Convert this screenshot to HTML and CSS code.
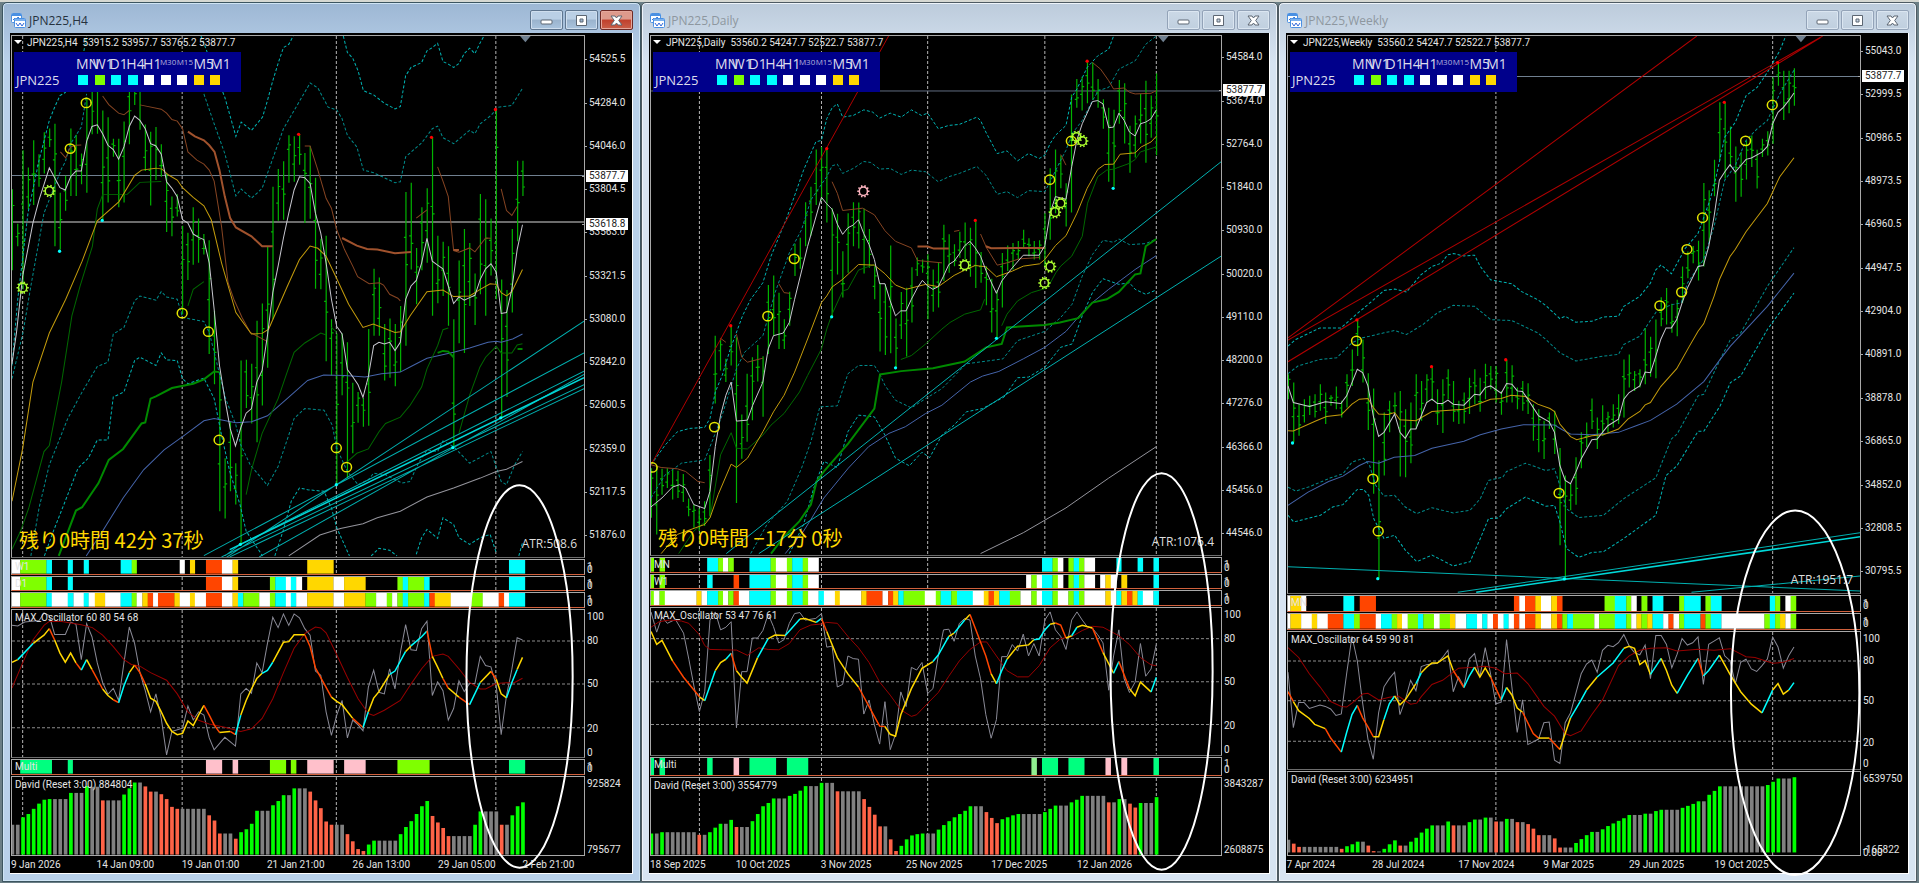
FILE: index.html
```html
<!DOCTYPE html>
<html lang="ja">
<head>
<meta charset="utf-8">
<title>JPN225</title>
<link rel="stylesheet" href="styles.css">
</head>
<body>
<main class="workspace" id="workspace"></main>
<script src="charts.js"></script>
</body>
</html>
```
FILE: styles.css
```css
* { box-sizing: border-box; }
body {
  margin: 0;
  height: 100vh;
  background: #d6d8d2;
  font-family: Roboto, "Noto Sans", sans-serif;
  font-size: 10px;
  color: #e4e4e4;
  overflow: hidden;
}
.workspace {
  display: grid;
  grid-template-columns: 639fr 637fr 639fr;
  height: 100%;
  padding: 2px 2px 1px;
  background: linear-gradient(#d6d8d2 2px, #6b7f86 2px);
}
.window {
  display: flex;
  flex-direction: column;
  min-width: 0;
  min-height: 0;
  padding: 0 7px 7px;
  border: 1px solid #4e5a62;
  border-radius: 5px 5px 0 0;
  background: linear-gradient(#bccbdb, #d7e4f2 60px);
  box-shadow: inset 0 0 0 1px #eef4fa;
}
.window.active {
  background: linear-gradient(#9db7d4, #b9d1ea 60px);
  border-color: #3c5560;
  box-shadow: inset 0 0 0 1px #cfe4f4;
}
.titlebar {
  display: flex;
  align-items: center;
  gap: 2px;
  flex: none;
  height: 30px;
  padding: 4px 0 0 1px;
}
.titlebar > svg { width: 15px; height: 15px; flex: none; }
.titlebar button svg { width: 15px; height: 15px; }
.titlebar h1 {
  margin: 0;
  flex: 1;
  padding: 2px 0 0 1px;
  font: 12px/20px "Open Sans", "Noto Sans", sans-serif;
  color: #8e979f;
}
.active .titlebar h1 { color: #26323e; }
.titlebar button {
  display: grid;
  place-items: center;
  width: 33px;
  height: 20px;
  padding: 0;
  border: 1px solid #93a3b8;
  border-radius: 2px;
  background: linear-gradient(#cbd8e6, #c0cfdf);
  box-shadow: inset 0 0 0 1px #dbe6f1;
}
.active .titlebar button {
  border-color: #5f7690;
  background: linear-gradient(#bacfe5 45%, #9ab3cd 50%, #aac4de);
  box-shadow: inset 0 0 0 1px #cfdeee;
}
.active .titlebar button.close {
  border-color: #6e2a25;
  background: linear-gradient(#dd9a8c 45%, #c0402c 50%, #c9604a);
  box-shadow: inset 0 0 0 1px #e5a79b;
}
.client {
  position: relative;
  display: flex;
  flex-direction: column;
  flex: 1;
  min-height: 0;
  padding: 2px 0 0 1px;
  background: #000;
  border-right: 1px solid #fff;
  border-bottom: 1px solid #fff;
}
.stack {
  position: relative;
  display: flex;
  flex-direction: column;
  flex: 1;
  min-height: 0;
}
.pane {
  display: grid;
  grid-template-columns: 1fr 47px;
  flex-basis: 0;
  min-height: 0;
}
.plot {
  position: relative;
  min-width: 0;
  min-height: 0;
  border: 1px solid #a8a8a8;
  border-bottom-color: #6c6c6c;
  margin-bottom: 1px;
}
.plot.last { margin-bottom: 0; border-bottom-color: #a8a8a8; }
.plot svg, .overlay {
  position: absolute;
  inset: 0;
  width: 100%;
  height: 100%;
}
.overlay { width: calc(100% - 47px); overflow: visible; pointer-events: none; }
.plot svg *, .overlay * { vector-effect: non-scaling-stroke; }
.plot path, .overlay ellipse { fill: none; }
.strip { border-bottom-color: #d0603c; }
.axis { position: relative; }
.axis span, .times span {
  position: absolute;
  line-height: 12px;
  white-space: nowrap;
}
.axis span { left: 4px; transform: translateY(-50%); }
.axis.sub span { left: 2px; }
.axis.main span::before {
  content: "";
  position: absolute;
  left: -4px;
  top: 6px;
  width: 2px;
  height: 1px;
  background: #aaa;
}
.axis span.tag {
  left: 1px;
  padding: 0 3px;
  background: #fff;
  color: #222;
  z-index: 1;
}
.times { position: relative; flex: none; height: 17px; margin-right: 47px; }
.times span { top: 3px; }
.label {
  position: absolute;
  left: 3px;
  top: 2px;
  margin: 0;
  line-height: 12px;
  white-space: nowrap;
}
.strip .label, .multi .label { top: 1px; }
.plot .quote { top: 1px; left: 2px; }
.quote i {
  display: inline-block;
  margin-right: 5px;
  border: 4px solid transparent;
  border-top-color: #fff;
  border-bottom: 0;
  vertical-align: 2px;
}
.quote b { margin-right: 5px; font-weight: 400; }
.matrix {
  position: absolute;
  left: 2px;
  top: 16px;
  display: grid;
  grid-template-columns: 60px 151px;
  align-items: center;
  width: 227px;
  height: 40px;
  padding: 4px 0 4px 2px;
  background: #00008b;
  font: 13px/16px "Open Sans", "Noto Sans", sans-serif;
  color: #dcdcec;
}
.frames {
  display: grid;
  grid-template-columns: repeat(9, minmax(0, 1fr));
  grid-column: 2;
  font-size: 14px;
  white-space: nowrap;
}
.frames small { font-size: 8px; line-height: 11px; color: #b4b4dc; }
.cells { display: grid; grid-template-columns: repeat(9, minmax(0, 1fr)); padding-left: 2px; }
.cells i { width: 10px; height: 10px; }
.countdown {
  position: absolute;
  left: 7px;
  bottom: 4px;
  margin: 0;
  font: 20px/26px "Noto Sans CJK JP", sans-serif;
  color: #ffd700;
  white-space: nowrap;
}
.atr {
  position: absolute;
  right: 7px;
  bottom: 5px;
  margin: 0;
  font: 12px/16px "Open Sans", "Noto Sans", sans-serif;
  color: #dcdcdc;
}
.bg-C { background: #00ffff; }
.bg-L { background: #7fff00; }
.bg-W { background: #fff; }
.bg-Y { background: #ffd700; }
```
FILE: charts.js
```js
const COLORS = { W: '#fff', L: '#7fff00', C: '#00ffff', Y: '#ffd700', R: '#ff4500',
  G: '#00ff7f', P: '#ffc0cb', A: '#90ee90', g: '#00ff00', n: '#808080', r: '#ff6347',
  y: '#ffd700', c: '#00ffff', o: '#ff4500' };

const SERIES = {
  band: { stroke: '#00b4b4', dash: '3 2' },
  band2: { stroke: '#008c8c', dash: '3 2' },
  ma: { stroke: '#c8c8d0' },
  mid: { stroke: '#c49c0c' },
  brown: { stroke: '#864422' },
  brownT: { stroke: '#a0522d', width: 2 },
  green: { stroke: '#006800' },
  greenT: { stroke: '#008a00', width: 2 },
  blue: { stroke: '#4564aa' },
  low: { stroke: '#94949c' },
  trend: { stroke: '#00b0b0' },
  trendB: { stroke: '#00d8d8', width: 1.5 },
  red: { stroke: '#b00000' }
};

const CHARTS = [
{
  name: 'JPN225,H4', ohlc: '53915.2 53957.7 53765.2 53877.7', active: true,
  atr: 'ATR:508.6', countdown: '残り0時間 42分 37秒',
  left: 29, right: 1424, top: 105, bottom: 2569, step: 12.97,
  vlines: [55, 444, 820, 1209], hlines: [[526, '#708090'], [667, '#d8d8d8']], marker: 1281,
  main: [105, 1678],
  ticks: ['54525.5', '54284.0', '54046.0', '53804.5', '53563.0', '53321.5', '53080.0', '52842.0', '52600.5', '52359.0', '52117.5', '51876.0'],
  tick0: 178, tickStep: 129.9, tags: [['53877.7', 527], ['53618.8', 671]],
  bars: '568-812 672-740 450-870 502-628 420-615 462-560 396-520 384-440 370-740 578-750 527-633 384-588 403-588 460-553 290-578 200-402 200-400 330-660 350-608 415-470 415-622 363-608 240-432 200-313 200-388 372-513 394-617 380-540 432-530 520-697 590-710 583-650 678-945 699-842 622-796 656-790 703-765 722-1065 935-1157 1120-1540 1380-1562 1270-1480 1395-1520 1085-1640 1083-1228 1095-1275 965-1332 913-1221 742-1107 560-960 507-663 483-660 405-548 408-545 402-494 458-670 437-657 533-868 717-870 708-1087 960-1130 1003-1456 1003-1190 1030-1440 1152-1365 1180-1273 1198-1285 990-1282 808-1010 834-1010 975-1145 958-1137 975-1163 920-1120 576-1040 548-810 745-915 622-812 565-790 412-950 708-912 726-890 740-980 960-1345 783-1033 688-1062 730-920 822-978 582-885 598-950 656-828 327-900 840-1258 872-1195 688-940 482-725 482-588',
  lines: [
    ['band', '29,1100 43,900 68,640 95,480 120,360 133,320 146,285 160,275|200,180 211,105|490,105 510,170 548,290 575,408 588,365 613,390 640,350 652,300 665,240 680,180 691,140 704,130 715,105|837,105 847,155 860,172 873,210 886,270 911,283 937,308 963,325 976,318 989,225 1002,200 1028,185 1041,150 1054,140 1067,127 1080,182 1093,190 1106,200 1119,188 1132,158 1145,142 1158,158 1171,125 1180,105'],
    ['band2', '29,1140 56,1000 75,860 107,640 150,505 159,485 172,430 198,380 211,280|497,280 522,370 548,460 575,588 588,567 613,595 639,565 652,520 678,430 691,385 717,330 756,247 775,262 800,320 821,328 834,355 847,405 870,440 886,510 911,518 963,548 976,545 989,470 1028,428 1054,385 1067,377 1080,412 1106,430 1145,390 1158,400 1171,370 1197,345 1215,320 1248,315 1274,263'],
    ['band2', '75,1675 95,1530 120,1400 165,1260 200,1180 237,1103 263,1090 276,1005 302,985 328,905 341,890 380,903 393,877 406,893 432,900 445,955 497,967 510,1000 530,1100 550,1200 575,1280 587,1340 610,1400 652,1462 678,1405 704,1310 717,1260 743,1230 790,1235 810,1280 821,1350 847,1420 873,1460 898,1445 911,1425 940,1430 980,1455 1000,1450 1020,1395 1041,1355 1067,1360 1080,1328 1106,1345 1145,1395 1197,1360 1222,1450 1235,1460 1255,1400 1274,1360'],
    ['band', '108,1675 130,1600 165,1490 190,1410 215,1380 237,1325 263,1325 276,1195 302,1180 328,1085 341,1075 380,1100 393,1062 406,1083 432,1085 445,1140 458,1155 497,1138 522,1200 540,1310 560,1420 585,1520 600,1600 640,1675|670,1675 690,1600 710,1510 730,1470 750,1475 790,1480 808,1530 821,1590 852,1675|905,1675 924,1652 950,1658 968,1675|1015,1670 1028,1620 1041,1595 1067,1622 1080,1560 1106,1580 1119,1620 1145,1640 1171,1620 1195,1610 1210,1665|1265,1675 1274,1635'],
    ['low', '704,1675 780,1612 830,1592 885,1578 920,1560 976,1540 1041,1497 1106,1470 1171,1440 1210,1420 1235,1413 1274,1390'],
    ['blue', '210,1675 250,1600 300,1500 350,1415 400,1355 450,1310 497,1267 522,1260 575,1273 613,1270 652,1252 700,1200 750,1145 789,1129 840,1130 890,1135 930,1125 976,1120 1002,1103 1041,1078 1106,1060 1145,1047 1190,1030 1210,1027 1222,1030 1250,1020 1274,1005'],
    ['green', '29,1655 50,1600 70,1530 107,1360 120,1342 150,1150 175,950 195,860 225,740 237,628 250,584 310,583 341,547 393,544|458,920 471,870 497,847|600,1490 613,1415 626,1360 639,1305 678,1200 700,1120 717,1060 743,1032 782,1002 795,1008|808,985 821,1000|847,1390 870,1365 898,1352 924,1300 940,1275 976,1256 1000,1220 1028,1165 1041,1110 1067,1040 1080,992 1093,987|1119,1305 1145,1190 1170,1105 1184,1075 1210,1042 1222,1062 1248,1062 1261,1038 1274,1034'],
    ['greenT', '143,1675 185,1538 200,1528 240,1455 265,1385 300,1352 345,1275 354,1272 367,1200 380,1193 419,1168 471,1155 497,1142 522,1118 535,1120|1067,1062 1080,1056 1093,1058 1106,1075|1262,1050 1274,1050'],
    ['brown', '250,286 265,312 289,338 302,343 315,330|147,455 160,473 168,450 172,440 185,435 198,434|341,313 393,326 406,338 419,357 432,362 445,385 458,455 480,480 497,492 510,510 522,543 540,680 556,850 570,900 590,955 610,1000 652,1028|743,437 756,437 775,510 795,595 808,625 821,690 840,750 860,800 872,832 900,853 925,850 935,857 950,885 970,897 976,905|1067,500 1080,543 1093,590 1106,753 1119,758 1145,745 1158,757 1184,715 1197,716|1015,655 1041,630|1222,567 1235,632 1248,647 1261,620'],
    ['brownT', '458,394 475,408 497,420 510,435 523,455 535,510 548,590 561,655 575,683 613,710 639,740 665,740|834,715 870,738 895,748 920,750 963,761 1002,757|1106,751 1119,751'],
    ['mid', '29,1510 55,1350 80,1150 120,1002 160,900 200,785 237,663 290,605 328,526 345,510 380,504 395,507 410,524 432,540 445,563 471,592 497,618 515,660 540,790 575,940 613,1005 639,1003 655,990 700,862 730,780 756,739 775,746 795,770 820,835 850,915 885,985 910,975 963,1000 976,998 1000,950 1041,877 1080,872 1106,892 1145,890 1171,870 1195,853 1210,855 1222,880 1235,890 1248,877 1274,810'],
    ['ma', '29,1095 40,1000 55,830 80,670 95,600 120,503 146,563 159,570 172,530 185,513 198,513 211,423 224,378 237,373 250,400 263,435 276,448 289,477 302,440 315,378 328,347 341,360 354,385 367,430 380,437 393,462 406,545 419,565 432,590 445,660 458,670 471,703 484,713 497,720 510,790 522,930 535,1100 548,1200 561,1290 574,1343 587,1288 600,1244 613,1230 626,1150 639,1115 652,1010 665,880 678,800 691,715 704,640 717,570 730,530 743,533 756,550 769,640 782,700 795,790 808,900 821,982 834,1005 847,1112 860,1134 873,1158 885,1196 898,1134 911,1040 924,1030 937,1035 950,1030 963,1055 976,1030 989,900 1002,860 1015,843 1028,790 1041,716 1054,785 1067,797 1080,808 1093,860 1106,913 1119,893 1132,903 1145,895 1158,888 1171,840 1184,808 1197,793 1210,818 1222,943 1235,940 1248,870 1261,750 1274,675'],
    ['trend', '545,1685 1424,966|497,1674 1424,1062|548,1675 586,1640 1424,1117|540,1678 1424,1158|560,1678 1424,1170|632,1678 1424,1127'],
    ['trendB', '560,1656 1424,1137']
  ],
  dots: { red: [[728, 402], [1052, 411], [1208, 327]], cyan: [[145, 755], [249, 662], [586, 1640], [820, 1460], [1104, 1348], [1221, 1258]] },
  circles: [[210, 307], [171, 445], [444, 942], [508, 998], [534, 1325], [820, 1349], [845, 1407]],
  suns: [[120, 573], [55, 865]],
  strips: [
    { y: [1678, 1728], label: 'W1', runs: 'W29-49 L49-113 C113-126 C165-177 C204-216 C294-321 L321-333 W438-450 Y463-475 R502-541 W541-567 Y567-580 Y749-813 C1241-1280' },
    { y: [1728, 1778], label: 'D1', runs: 'W29-49 L49-113 C113-126 C165-177 R502-541 W541-567 Y567-580 L658-671 C671-697 W697-709 C709-722 W722-736 Y749-813 W813-839 Y839-891 L969-982 C982-995 L995-1034 C1034-1047 C1241-1280' },
    { y: [1778, 1828], label: '', runs: 'W29-49 L49-113 C113-126 W126-165 C165-179 W179-204 C204-216 W216-231 Y231-256 W256-294 C294-321 L321-333 W333-347 Y347-360 R360-373 W373-385 R385-425 Y425-438 W438-463 Y463-475 W475-502 R502-541 W541-567 Y567-580 C580-593 L593-632 W632-658 L658-671 C671-697 W697-709 C709-722 W722-749 Y749-813 W813-839 Y839-891 L891-917 W917-943 L943-956 W956-969 L969-982 C982-995 L995-1034 C1034-1047 R1047-1060 Y1060-1099 W1099-1150 L1150-1177 W1177-1216 R1216-1229 W1229-1241 C1241-1280' }
  ],
  osc: { y: [1828, 2280], label: 'MAX_Oscillator 60 80 54 68', levels: [[100, 232], [80, 303], [50, 435], [20, 569], [0, 640]],
    white: '29,255 43,257 60,245 95,240 107,217 120,225 133,283 159,283 172,245 185,252 198,360 211,250 224,290 237,370 250,430 263,466 276,448 289,485 302,370 315,260 328,310 341,400 354,455 367,520 380,465 393,540 406,652 419,580 445,570 458,502 471,545 484,520 497,530 510,600 522,636 548,598 574,625 587,465 600,448 613,463 626,370 639,400 652,310 665,230 678,262 691,220 704,255 717,220 730,232 743,265 756,285 769,395 782,408 795,520 808,592 821,530 834,485 847,600 860,545 873,560 885,578 898,445 911,392 924,460 937,465 950,388 963,450 976,340 989,253 1002,330 1015,332 1028,265 1041,242 1054,470 1067,428 1080,455 1093,545 1106,510 1119,425 1132,458 1145,433 1158,433 1171,350 1184,378 1197,382 1210,440 1222,590 1235,470 1248,390 1261,293 1274,300',
    red: '29,447 55,370 80,300 107,255 120,243 150,243 198,253 225,262 250,285 276,320 302,360 320,375 341,380 367,400 406,423 432,465 458,520 484,546 510,557 548,567 587,580 613,572 639,540 665,480 691,400 717,325 743,280 769,260 782,263 795,278 821,345 847,415 873,480 898,525 911,531 937,515 976,485 1002,435 1028,388 1054,350 1080,343 1093,350 1119,388 1145,430 1171,450 1184,450 1210,433 1235,431 1255,430 1274,417',
    colored: 'y 29,368 43,360|c 81,310|y 94,297 107,285 120,265|o 133,300|y 146,340 159,368 172,340 185,370|o 198,392|c 211,360|y 224,390|o 250,450|y 263,470 276,483|o 289,492|c 302,440 315,400|y 328,377|o 341,400 354,435|y 367,478 380,488 393,520 406,555 419,580 432,590 445,586 458,548 471,562 484,530 497,500|o 510,530 522,560 535,583|y 561,580|o 574,590|c 587,530|y 600,485 613,450 626,418 639,402|c 652,393 665,368|y 691,307 704,305 717,284 743,284|o 756,320 769,385 782,415 808,475|y 821,488 834,498 860,540|o 885,568|c 898,520|y 911,478 924,458 950,405|c 963,395 989,335|y 1002,318|c 1028,290 1041,272|o 1054,350|y 1067,383 1080,418|o 1093,447|y 1119,475|o 1145,498|c 1171,430|y 1197,396|o 1210,420|y 1222,465 1235,477|c 1248,430 1261,390|y 1274,353' },
  multi: { y: [2280, 2330], label: 'Multi', ends: [682, 690], runs: 'G49-126 G165-177 P502-541 P567-580 L658-697 L709-722 P749-813 P839-891 L969-1047 G1241-1280' },
  david: { y: [2330, 2570], base: 949, label: 'David (Reset 3:00) 884804', scale: [['925824', 733], ['795677', 931]],
    bars: 'n857*2 g834 g824 g808 g792 g780 g778 n778*3 g759 n759*2 g738 n740*2 r782 n782*3 g764 g745 g727 n727 r739 r755 n755 r763 r778 r802 r808 n808*5 r828 r844 r884 n884*2 r900 g880 g871 g854 g814 n814*2 g797 g784 g766 n766 g745 n745*2 r755 r782 r806 r847 r857 n857*2 r886 r908 r932 r938 g918 g906 n906*4 g886 g864 g846 g824 g800 g784 r830 r850 r867 r892 n892*4 g857 g816 n816*3 r857 n857 g828 g800 g788' },
  times: [['9 Jan 2026', 29], ['14 Jan 09:00', 237], ['19 Jan 01:00', 444], ['21 Jan 21:00', 651], ['26 Jan 13:00', 859], ['29 Jan 05:00', 1067], ['2 Feb 21:00', 1272]],
  ellipse: [1265, 2030, 129, 574]
},
{
  name: 'JPN225,Daily', ohlc: '53560.2 54247.7 52522.7 53877.7',
  atr: 'ATR:1076.4', countdown: '残り0時間 −17分 0秒',
  left: 25, right: 1426, top: 105, bottom: 2569, step: 13.07,
  vlines: [144, 444, 705, 993, 1267], hlines: [[271, '#606c80']], marker: 1284,
  main: [105, 1672],
  ticks: ['54584.0', '53674.0', '52764.0', '51840.0', '50930.0', '50020.0', '49110.0', '48200.0', '47276.0', '46366.0', '45456.0', '44546.0'],
  tick0: 172, tickStep: 129.9, tags: [['53877.7', 271]],
  bars: '1410-1560 1403-1610 1412-1490 1410-1470 1415-1505 1418-1500 1428-1512 1502-1555 1520-1590 1532-1600 1510-1585 1370-1555 1010-1215 1018-1115 1080-1150 980-1100 1015-1515 1248-1382 1125-1330 1075-1265 1038-1148 1072-1255 857-1065 828-1010 880-1050 960-1050 877-980 732-830 714-808 607-740 560-708 448-615 440-602 446-668 625-955 642-825 755-895 640-820 607-740 608-747 626-822 688-805 800-900 850-1058 855-1068 738-1063 958-1105 878-1020 865-1073 803-970 774-830 780-820 764-960 810-938 790-925 675-845 704-820 734-800 696-775 668-780 684-832 665-866 757-850 800-918 838-1000 872-1018 760-925 738-815 730-810 724-780 690-745 716-770 724-780 722-780 640-800 504-720 448-640 466-565 550-680 282-638 235-322 228-330 182-308 185-298 235-322 296-385 322-545 328-560 238-370 248-430 376-518 345-472 280-430 240-488 285-412 218-465',
  lines: [
    ['band', '25,1400 60,1340 90,1300 120,1290 157,1287 170,1260 183,1180 200,1130 220,1050 250,950 270,900 300,850 320,770 360,650 400,510 430,425 444,420 457,355 470,322 483,310 496,350 522,345 548,328 570,335 587,353 613,338 640,350 665,328 690,345 705,338 731,385 757,375 783,372 826,350 835,360 848,395 876,460 900,452 926,482 953,460 979,475 993,465 1006,430 1019,405 1045,375 1059,290 1072,265 1097,200 1123,165 1150,145 1162,105'],
    ['band2', '25,1500 60,1430 100,1395 157,1385 175,1330 200,1250 235,1110 255,1060 300,1010 330,880 365,760 395,690 418,600 440,560 457,530 470,497 483,492 496,520 522,505 548,484 565,487 587,507 613,505 640,523 665,510 700,515 731,545 757,530 783,520 826,499 848,525 876,583 900,575 926,593 953,572 993,575 1006,545 1032,480 1045,450 1060,400 1085,360 1110,300 1125,270 1150,260 1175,205 1215,180 1228,155 1241,130 1267,105'],
    ['band2', '270,1668 310,1580 360,1510 395,1410 418,1330 440,1225 483,1222 509,1125 535,1100 574,1100 587,1125 600,1160 626,1205 665,1228 700,1200 740,1170 800,1095 890,1080 926,1025 993,997 1032,955 1060,915 1085,830 1110,765 1136,722 1162,728 1175,718 1201,735 1241,732 1267,718'],
    ['band', '365,1668 400,1580 425,1470 450,1390 483,1408 509,1300 535,1250 574,1255 600,1310 626,1380 660,1403 691,1362 710,1378 740,1310 770,1280 800,1240 840,1230 893,1195 926,1137 953,1135 993,1105 1032,1045 1060,1035 1085,950 1110,880 1136,838 1175,855 1201,850 1215,870 1241,885 1267,872'],
    ['low', '835,1668 940,1605 1045,1530 1150,1440 1267,1345'],
    ['blue', '355,1668 400,1600 418,1565 450,1500 510,1410 560,1345 610,1305 650,1285 700,1245 740,1220 810,1150 840,1132 880,1118 940,1080 993,1045 1045,997 1085,940 1110,910 1150,870 1215,810 1267,768'],
    ['green', '93,1668 130,1600 170,1560 196,1370 222,1303 235,1350 262,1352 300,1310 320,1280 352,1245 390,1180 410,1130 444,1050 457,990 470,945 496,875 509,870 535,812 574,795|639,1082 665,1070 700,1035 740,990 760,970 796,945 835,932 845,900|887,980 900,945 926,905 960,880 1000,865 1020,820 1032,800 1059,770 1085,710 1098,610 1123,530 1145,510 1162,507 1200,490 1215,478 1228,455 1267,440'],
    ['greenT', '320,1668 350,1620 390,1570 418,1520 432,1450 450,1420 510,1335 574,1230 588,1127 640,1117 718,1108 796,1088 850,1045 887,1035 900,985 993,978 1030,970 1075,957 1110,910 1145,900 1175,878 1215,825 1228,822 1241,740 1267,718'],
    ['brown', '25,1400 50,1408 90,1412 110,1420 140,1450 157,1454|196,1018 209,1030|235,1005 248,1075 262,1090 300,1078|339,853 352,880 365,882|470,545 483,580 496,632 545,625 574,645 600,693 626,725 665,745 680,783 740,790|835,703 850,745 876,797 900,790 930,778 980,774|1110,185 1130,205 1150,240 1162,265 1188,262 1201,275 1215,280 1254,278 1267,270|1032,463 1045,495|770,695 783,692'],
    ['brownT', '680,741 705,741 720,747 757,747|848,740 861,746 993,745'],
    ['mid', '50,1668 90,1610 157,1580 170,1560 190,1490 222,1398 235,1408 262,1380 300,1300 326,1240 352,1190 378,1120 410,1020 444,910 457,890 470,863 496,840 522,810 535,795 574,797 600,823 626,857 652,870 700,855 731,862 770,828 796,812 822,798 848,802 874,832 913,815 940,800 980,793 993,780 1019,738 1045,708 1072,640 1097,565 1123,508 1140,493 1162,492 1178,462 1215,458 1230,440 1254,425 1267,408'],
    ['ma', '25,1527 52,1500 78,1467 95,1460 110,1470 130,1520 157,1532 170,1480 183,1345 196,1250 209,1190 222,1150 235,1268 262,1265 275,1220 300,1150 313,1050 326,1010 350,1002 365,970 378,900 410,740 444,592 457,612 470,628 483,673 496,704 509,684 522,676 535,660 548,702 561,735 574,780 587,853 600,853 613,905 626,950 639,935 652,935 665,900 680,865 692,843 705,860 718,870 731,862 744,830 757,795 770,785 783,763 796,738 809,725 822,745 835,770 848,812 861,848 874,882 887,845 913,805 940,767 979,767 993,738 1006,640 1019,590 1045,598 1059,500 1072,418 1085,370 1110,303 1123,300 1136,310 1150,382 1162,380 1175,338 1188,360 1201,395 1215,407 1228,370 1241,365 1254,355 1267,328'],
    ['trend', '210,1668 1426,485|290,1668 1426,770'],
    ['red', '25,1400 609,105']
  ],
  dots: { red: [[457, 445], [822, 662], [1097, 181], [221, 980]], cyan: [[1161, 565], [469, 953], [626, 1107], [874, 1018]] },
  circles: [[377, 778], [1005, 539], [1058, 422], [181, 1286], [312, 951], [28, 1408]],
  suns: [[1071, 410], [1085, 422], [1018, 637], [1032, 610], [1006, 801], [992, 851], [796, 797], [547, 574, '#ffb6c1']],
  strips: [
    { y: [1672, 1722], label: 'MN', runs: 'L25-32 L46-59 C163-190 L190-202 W202-215 L215-228 C267-319 L319-332 W332-359 L359-372 C372-398 L398-411 W411-437 C986-1012 L1012-1025 W1025-1038 L1051-1064 C1064-1077 L1077-1090 W1090-1116 C1169-1181 C1221-1234 C1260-1273' },
    { y: [1722, 1772], label: 'W1', runs: 'L25-32 L46-59 C163-176 R228-241 C267-319 L319-332 W332-359 L359-372 C372-398 L398-411 W411-437 W947-960 L960-973 W973-986 C986-1012 L1012-1025 W1025-1038 L1051-1064 C1064-1077 L1077-1090 W1090-1116 W1129-1142 Y1142-1155 W1155-1169 Y1181-1195 C1260-1273' },
    { y: [1772, 1823], label: '', runs: 'L25-32 W32-46 L46-59 W59-137 Y137-149 W149-163 C163-190 L190-202 W202-215 L215-228 R228-241 W241-267 C267-319 L319-332 W332-359 L359-372 C372-398 L398-411 W411-437 C437-450 W450-477 Y477-489 W489-542 Y542-555 R555-594 W594-608 R608-620 Y620-633 C633-646 L646-698 W698-725 L725-737 C737-763 L763-777 C777-816 W816-843 Y843-855 R855-868 Y868-881 C881-907 L907-933 W933-960 L960-973 W973-986 C986-1012 L1012-1025 W1025-1051 L1051-1064 C1064-1077 L1077-1090 W1090-1142 Y1142-1155 W1155-1169 C1169-1181 Y1181-1195 R1195-1208 Y1208-1221 C1221-1234 W1234-1260 C1260-1273' }
  ],
  osc: { y: [1823, 2272], label: 'MAX_Oscillator 53 47 76 61', levels: [[100, 226], [80, 297], [50, 429], [20, 560], [0, 632]],
    white: '25,215 39,277 52,230 65,250 85,238 105,280 118,360 131,445 144,520 157,460 170,240 183,215 196,270 209,262 222,245 235,570 248,398 261,398 274,295 287,295 300,272 313,222 326,260 339,310 352,300 365,250 378,220 391,217 404,240 430,235 444,220 457,323 470,320 483,445 496,437 509,350 522,358 535,360 548,528 561,485 574,560 587,620 600,490 613,637 626,590 639,460 652,505 665,385 678,393 691,370 705,465 718,450 731,350 744,270 757,268 770,305 783,250 796,235 809,240 822,350 835,420 848,530 861,602 874,545 887,352 900,352 913,315 926,335 940,283 953,350 966,312 979,350 993,240 1006,215 1019,270 1032,290 1045,330 1059,240 1072,215 1085,240 1097,260 1110,265 1123,285 1136,310 1150,455 1162,350 1175,270 1188,420 1201,462 1215,430 1228,312 1241,412 1254,390 1267,315',
    red: '25,262 45,245 70,240 100,243 118,250 144,285 157,318 170,330 200,331 235,332 262,348 290,325 313,330 339,331 365,312 391,270 418,255 444,252 457,247 483,250 509,290 535,325 561,370 587,430 613,470 639,515 665,535 678,530 705,495 731,462 757,412 783,365 809,330 835,307 850,307 874,350 900,395 926,414 953,414 979,380 1006,325 1032,297 1060,290 1085,272 1110,259 1136,262 1175,288 1201,315 1228,355 1254,377 1267,380',
    colored: 'y 25,275 39,314 52,302 78,365|o 105,415 144,475|y 157,487|c 183,395|y 196,370 209,360|c 222,342|o 235,395|y 248,415 261,433 287,355|c 313,297|y 330,286 355,287|c 378,255 391,237|y 404,235 431,247|c 444,235|o 457,275|y 483,355 509,405 535,445|o 574,535 587,565 600,566|y 613,590 626,596 639,530 665,450 691,388 718,367|c 731,347 757,290|y 770,280|c 796,240|y 809,223|o 822,265 848,350 861,405|y 874,435|c 887,395 900,360|y 926,320 953,316 966,300|c 979,298 993,270 1006,253|y 1019,249|o 1032,255 1045,295|y 1059,288|c 1072,262|y 1085,256 1110,264|o 1136,340|y 1162,403|c 1175,367|o 1201,450|y 1215,472 1228,430 1254,460|c 1267,415' },
  multi: { y: [2272, 2333], label: 'Multi', ends: [675, 692], runs: 'G25-32 G46-59 G163-176 P228-241 G267-332 G359-411 A960-973 G986-1025 G1051-1090 P1142-1155 P1181-1195 G1260-1273' },
  david: { y: [2333, 2570], base: 949, label: 'David (Reset 3:00) 3554779', scale: [['3843287', 735], ['2608875', 931]],
    bars: 'g884 n884 g880 n880*6 r888 n888 g880 g866 g854 n854 g842 r864 n864*2 g846 g824 g800 g790 g776 n776*2 g768 g762 g752 g738 n738*2 g728 n728*2 r754 n754*4 r778 r802 r826 r862 n862 r902 r938 g922 g902 g890 g886 g884 n884*2 g872 g858 g846 g834 g824 g814 g800 n800*2 r818 r836 r852 g840 g834 g828 g824 n824*4 g818 g808 g798 n798*2 g788 g780 g768 n768*4 r788 n788 g778 n778 r792 r804 g790 n790*2 g772' },
  times: [['18 Sep 2025', 25], ['10 Oct 2025', 235], ['3 Nov 2025', 443], ['25 Nov 2025', 652], ['17 Dec 2025', 861], ['12 Jan 2026', 1071]],
  ellipse: [1278, 2015, 125, 595]
},
{
  name: 'JPN225,Weekly', ohlc: '53560.2 54247.7 52522.7 53877.7',
  atr: 'ATR:1951.7', countdown: '',
  left: 31, right: 1426, top: 105, bottom: 2565, step: 12.99,
  vlines: [538, 1213], hlines: [[227, '#708090']], marker: 1282,
  main: [105, 1784],
  ticks: ['55043.0', '52999.5', '50986.5', '48973.5', '46960.5', '44947.5', '42904.0', '40891.0', '38878.0', '36865.0', '34852.0', '32808.5', '30795.5'],
  tick0: 153, tickStep: 130, tags: [['53877.7', 228]],
  bars: '1125-1200 1150-1330 1215-1310 1200-1270 1190-1248 1185-1255 1155-1235 1180-1275 1188-1220 1162-1230 1205-1255 1125-1225 1050-1160 960-1070 1020-1150 1122-1293 1168-1485 1385-1740 1240-1430 1205-1300 1180-1245 1175-1433 1230-1435 1210-1393 1125-1290 1145-1265 1125-1210 1105-1205 1170-1278 1140-1302 1110-1200 1145-1268 1205-1275 1180-1273 1135-1245 1110-1215 1135-1238 1093-1200 1100-1170 1100-1210 1175-1247 1082-1210 1098-1210 1165-1230 1145-1235 1152-1245 1215-1325 1230-1360 1265-1380 1240-1290 1235-1365 1347-1640 1430-1740 1455-1535 1375-1518 1300-1408 1270-1345 1198-1290 1255-1350 1218-1310 1238-1300 1215-1285 1185-1275 1080-1255 1065-1165 1115-1175 1110-1165 985-1155 1012-1132 960-1137 893-980 865-975 912-1000 900-1010 800-910 755-835 738-790 722-842 548-800 570-725 478-588 305-480 307-535 378-500 438-605 455-590 420-538 405-500 448-565 415-470 392-465 230-430 187-255 210-358 210-338 202-315',
  lines: [
    ['band', '31,1040 50,1020 109,985 160,985 200,942 240,900 265,872 291,868 320,877 355,825 382,800 405,790 420,765 434,761 460,768 486,766 500,800 525,840 577,852 600,875 640,900 660,918 694,957 707,950 733,968 772,965 800,952 837,950 850,920 889,890 915,850 928,810 941,795 966,822 1000,745 1031,700 1060,600 1075,530 1096,410 1122,365 1148,285 1175,260 1200,215 1230,150 1245,105'],
    ['band2', '31,1123 55,1100 109,1080 150,1075 187,1030 213,1015 265,1000 291,993 320,1005 360,975 395,940 434,917 486,920 525,960 577,963 640,1000 660,1020 694,1060 733,1085 800,1070 837,1065 850,1035 889,1010 930,935 966,915 990,910 1005,850 1044,780 1070,680 1096,540 1122,495 1148,420 1175,385 1200,360 1230,280 1265,208'],
    ['band2', '31,1465 50,1477 85,1463 135,1437 165,1425 187,1390 215,1378 230,1400 245,1460 265,1492 291,1490 317,1525 345,1545 382,1527 434,1543 475,1535 500,1500 520,1445 555,1435 564,1418 610,1393 660,1415 681,1410 694,1460 710,1530 740,1557 800,1550 850,1500 928,1437 966,1320 980,1305 1031,1190 1045,1185 1085,1080 1110,1020 1135,1000 1200,860 1265,743'],
    ['band', '31,1550 45,1570 110,1550 140,1525 165,1518 200,1472 215,1472 228,1490 240,1560 265,1620 291,1610 317,1655 345,1690 382,1670 434,1703 475,1690 500,1620 520,1560 545,1558 564,1530 610,1495 660,1523 681,1520 694,1570 710,1650 740,1677 772,1662 800,1660 850,1620 928,1550 953,1430 980,1400 1031,1297 1045,1297 1085,1220 1110,1150 1135,1130 1200,990 1265,880'],
    ['blue', '31,1520 80,1480 130,1448 165,1432 205,1400 226,1388 252,1393 290,1375 340,1370 382,1348 460,1327 500,1307 551,1290 605,1277 681,1278 700,1292 720,1305 772,1307 837,1300 880,1280 915,1264 979,1215 1045,1147 1085,1080 1110,1040 1200,920 1265,820'],
    ['mid', '31,1295 44,1296 100,1265 125,1252 161,1247 187,1215 205,1200 226,1198 239,1225 252,1245 275,1246 291,1240 304,1262 343,1265 382,1237 460,1230 500,1212 525,1200 551,1198 575,1188 610,1192 640,1215 670,1228 681,1237 694,1275 720,1313 735,1322 772,1310 800,1307 837,1290 860,1260 889,1237 902,1217 915,1210 940,1162 979,1108 1010,1040 1031,995 1045,972 1070,890 1083,840 1109,770 1122,748 1148,695 1200,610 1230,530 1265,472'],
    ['ma', '31,1160 44,1210 83,1222 122,1208 160,1213 174,1190 187,1150 200,1110 213,1120 226,1160 239,1250 252,1312 265,1300 291,1245 304,1300 317,1318 330,1290 343,1290 356,1250 369,1210 382,1200 395,1213 408,1213 421,1203 434,1215 460,1218 486,1185 499,1187 512,1165 525,1160 551,1182 564,1153 577,1155 590,1175 603,1177 616,1200 642,1250 668,1268 681,1300 694,1400 707,1445 720,1455 733,1420 746,1380 772,1322 785,1320 811,1280 837,1260 850,1200 863,1180 889,1160 902,1118 915,1120 928,1070 940,1020 953,985 966,985 979,960 992,910 1005,865 1031,800 1044,797 1057,740 1070,650 1083,540 1096,515 1109,493 1122,515 1148,477 1161,473 1187,455 1200,438 1213,370 1226,335 1239,320 1252,300 1265,277'],
    ['trend', '31,1705 1426,1778|445,1782 1426,1603|1015,1782 1426,1733'],
    ['trendB', '490,1782 1426,1615'],
    ['red', '31,1015 1028,105|31,1022 1335,105|31,1087 1330,110']
  ],
  dots: { red: [[199, 961], [381, 1102], [562, 1081], [1095, 305], [1225, 185]], cyan: [[42, 1332], [250, 1741], [705, 1742]] },
  circles: [[1212, 313], [1147, 421], [1042, 653], [1004, 748], [991, 877], [938, 918], [198, 1024], [238, 1440], [251, 1598], [692, 1483]],
  suns: [],
  strips: [
    { y: [1784, 1839], label: 'MN', runs: 'W31-37 Y37-63 W63-75 C166-192 R206-245 R582-595 W595-609 R609-634 Y634-648 W648-673 Y673-687 R687-700 L803-828 C828-856 L856-868 W868-881 L893-907 C920-946 L985-997 C997-1037 L1049-1062 C1062-1088 C1206-1219 L1219-1231 W1244-1257 L1257-1270' },
    { y: [1839, 1892], label: '', runs: 'W31-37 Y37-63 W63-89 Y89-102 W102-128 R128-166 C166-192 L192-206 R206-245 W245-258 C258-284 L284-297 Y297-309 W309-323 L323-348 C348-361 L361-387 W387-401 L401-426 Y426-439 W439-466 C466-492 W492-505 C505-517 W517-531 R531-543 W543-557 C557-569 W569-582 R582-595 W595-609 R609-634 Y634-648 W648-673 Y673-687 R687-700 L700-712 C712-726 L726-778 W778-790 L790-828 C828-856 L856-868 W868-881 Y881-893 L893-907 Y907-920 C920-946 W946-959 R959-971 W971-985 L985-997 C997-1037 R1037-1049 L1049-1062 C1062-1088 W1088-1193 L1193-1206 C1206-1219 L1219-1231 Y1231-1244 W1244-1257 L1257-1270' }
  ],
  osc: { y: [1892, 2312], label: 'MAX_Oscillator 64 59 90 81', levels: [[100, 296], [80, 361], [50, 483], [20, 607], [0, 671]],
    white: '31,395 44,565 57,488 70,488 83,506 109,496 122,500 135,508 148,528 161,523 174,400 187,285 200,360 213,490 226,600 239,662 252,520 265,440 278,415 291,395 304,525 317,480 330,420 343,452 356,378 369,372 395,368 408,350 421,328 434,455 447,410 460,440 473,355 486,338 499,410 512,320 525,400 538,492 551,487 564,295 577,440 590,580 603,480 616,617 642,600 655,550 668,548 681,665 694,675 707,550 720,520 733,460 746,400 759,370 772,358 785,395 798,328 811,313 824,317 837,305 850,280 863,315 876,335 889,342 902,312 915,415 928,283 941,283 954,310 967,382 980,340 992,292 1005,312 1018,305 1031,287 1044,433 1057,310 1070,300 1083,290 1096,345 1109,360 1122,430 1135,365 1148,355 1161,385 1174,393 1187,375 1200,355 1213,288 1226,318 1239,383 1252,345 1265,318',
    red: '31,320 57,350 83,400 109,440 135,485 161,500 174,502 187,490 213,462 226,460 252,480 278,472 300,468 330,493 345,490 356,470 382,433 408,420 447,383 486,380 512,377 538,383 560,400 590,398 616,430 655,500 681,530 707,583 720,590 746,575 772,525 798,480 837,375 863,345 889,328 915,322 954,320 980,330 1031,325 1070,328 1110,323 1148,348 1170,350 1213,368 1239,365 1265,353',
    colored: 'o 31,455 44,485|y 57,513 83,537 96,555 122,568|o 135,597 161,640|c 174,580 187,525 200,497|o 213,535 226,563 239,593|y 252,593 265,540|c 278,492 291,468|y 304,495 317,480 343,430|c 356,397|y 369,380 382,367 395,367 421,345 434,390|o 460,442|c 473,407 486,380|y 499,410 512,382 525,410|o 551,480|c 564,442|y 577,465 590,505 603,518|o 629,583 642,597|y 668,597|o 694,632|y 720,535|c 746,480 759,450|y 785,410|c 824,367 850,322|y 863,316 876,322 889,372 902,360 915,402|c 941,353|y 954,390 967,435 980,460|c 1005,405 1031,353|o 1044,407|c 1057,390 1083,343|y 1109,402 1135,455 1161,493 1187,520|c 1213,450|y 1226,430 1239,462 1252,450|c 1265,427' },
  david: { y: [2312, 2567], base: 939, label: 'David (Reset 3:00) 6234951', scale: [['6539750', 715], ['-165822', 929], ['0.00', 938]],
    bars: 'n900 r912 r922 n922*7 r928 g920 g914 g906 n906 r918 r935 n936 g928 g914 g902 r918 n918 g906 g894 g878 g866 g856 n856*2 g844 r856 n856*2 g846 g838 n838 g832 n832 r844 n844 g836 n836 r846 n846 r852 r866 r886 n886*2 r896 r924 n924*2 g910 g898 g886 g876 n876 g868 g858 g850 g842 g834 g824 n824*2 g820 n820 g812 g808 n808*3 g802 g796 g790 g782 n782 g762 g750 g736 n736*8 g732 g722 g712 n712*2 g708' },
  times: [['7 Apr 2024', 30], ['28 Jul 2024', 238], ['17 Nov 2024', 447], ['9 Mar 2025', 654], ['29 Jun 2025', 862], ['19 Oct 2025', 1070]],
  ellipse: [1266, 2076, 156, 546]
}
];

/* Sub-window values are measured from this row of the chart. */
const SUB = 1620;

const points = (text, dy = 0) => text.split(' ').map(p => {
  const [x, y] = p.split(',').map(Number);
  return [x, y + dy];
});
const path = (text, dy) => text.split('|').map(s => 'M' + points(s, dy).map(p => p.join(' ')).join('L')).join('');
const line = (d, stroke, width = 1, dash = '') =>
  `<path d="${d}" stroke="${stroke}" stroke-width="${width}"${dash ? ` stroke-dasharray="${dash}"` : ''}/>`;

function svg(c, [y0, y1], body) {
  const grid = c.vlines.map(x => line(`M${x} ${y0}V${y1}`, '#b4b4b4', 1, '3 2')).join('');
  return `<svg viewBox="${c.left} ${y0} ${c.right - c.left} ${y1 - y0}" preserveAspectRatio="none" aria-hidden="true">${grid}${body}</svg>`;
}

function bars(c) {
  let d = '';
  c.bars.split(' ').forEach((b, i) => {
    const [hi, lo] = b.split('-').map(Number);
    const x = c.left + 1 + i * c.step;
    const open = hi + (lo - hi) * (0.25 + (i * 7 % 11) / 22);
    const close = hi + (lo - hi) * (0.2 + (i * 5 % 13) / 22);
    d += `M${x} ${hi}V${lo}M${x - 5} ${open}H${x}M${x} ${close}H${x + 5}`;
  });
  return line(d, '#00b400', 1.2);
}

function sun([x, y, color = '#adff2f']) {
  let d = '';
  for (let k = 0; k < 10; k++) {
    const a = k * Math.PI / 5, cx = Math.cos(a), cy = Math.sin(a);
    d += `M${x + cx * 11} ${y + cy * 14}L${x + cx * 15} ${y + cy * 19}`;
  }
  return `<ellipse cx="${x}" cy="${y}" rx="10" ry="13" fill="none" stroke="${color}" stroke-width="1.5"/>` + line(d, color, 1.5);
}

function mainBody(c) {
  const h = c.hlines.map(([y, s]) => line(`M${c.left} ${y}H${c.right}`, s)).join('');
  const lines = c.lines.map(([k, t]) => line(path(t), SERIES[k].stroke, SERIES[k].width || 1, SERIES[k].dash)).join('');
  const dots = Object.entries(c.dots).map(([color, list]) =>
    list.map(([x, y]) => `<ellipse cx="${x}" cy="${y}" rx="4" ry="5" fill="${color}"/>`).join('')).join('');
  const rings = c.circles.map(([x, y]) =>
    `<ellipse cx="${x}" cy="${y}" rx="12" ry="14" fill="none" stroke="#e6e600" stroke-width="1.5"/>`).join('');
  const m = c.marker;
  return h + bars(c) + lines + dots + rings + c.suns.map(sun).join('') +
    `<polygon points="${m - 13},105 ${m + 13},105 ${m},124" fill="#708090"/>`;
}

const stripBody = (runs, [y0, y1]) => runs.split(' ').map(r => {
  const [a, b] = r.slice(1).split('-').map(Number);
  return `<rect x="${a}" y="${y0}" width="${b - a + 0.5}" height="${y1 - y0}" fill="${COLORS[r[0]]}"/>`;
}).join('');

function oscBody(c) {
  const o = c.osc;
  let out = o.levels.filter(l => l[0] % 100).map(l => line(`M${c.left} ${l[1] + SUB}H${c.right}`, '#8c8c8c', 1, '3 2')).join('');
  out += line(path(o.white, SUB), '#8a8a96') + line(path(o.red, SUB), '#980000');
  let last = null;
  o.colored.split('|').forEach(seg => {
    const pts = points(seg.slice(2), SUB);
    const all = last ? [last, ...pts] : pts;
    out += line('M' + all.map(p => p.join(' ')).join('L'), COLORS[seg[0]], 1.5);
    last = pts[pts.length - 1];
  });
  return out;
}

function davidBody(c) {
  let i = 0, out = '';
  const base = c.david.base + SUB;
  c.david.bars.split(' ').forEach(t => {
    const [v, n = 1] = t.slice(1).split('*').map(Number);
    for (let k = 0; k < n; k++, i++) {
      const x = c.left + 1 + i * c.step - 4.5;
      out += `<rect x="${x}" y="${v + SUB}" width="9" height="${base - v - SUB}" fill="${COLORS[t[0]]}"/>`;
    }
  });
  return out;
}

function axis(range, list, cls) {
  const [a, b] = range;
  return `<div class="axis ${cls}">` + list.map(([t, y, tag]) =>
    `<span${tag ? ' class="tag"' : ''} style="top:${((y - a) / (b - a) * 100).toFixed(2)}%">${t}</span>`).join('') + '</div>';
}

function pane(c, range, cls, body, labels, scale, axisClass = 'sub') {
  return `<section class="pane" style="flex-grow:${range[1] - range[0]}">
    <div class="plot ${cls}">${svg(c, range, body)}${labels}</div>${axis(range, scale, axisClass)}</section>`;
}

const label = t => t ? `<p class="label">${t}</p>` : '';
const sub = list => list.map(([t, y]) => [t, y + SUB]);

const matrix = `<div class="matrix"><div class="frames"><span>MN</span><span>W1</span><span>D1</span><span>H4</span><span>H1</span><small>M30</small><small>M15</small><span>M5</span><span>M1</span></div>
  <span>JPN225</span><div class="cells">${[...'CLCCWWWYY'].map(k => `<i class="bg-${k}"></i>`).join('')}</div></div>`;

const icon = `<svg viewBox="0 0 15 15" aria-hidden="true"><rect x=".5" y=".5" width="10" height="9" rx="1" fill="#fff" stroke="#4a90e2"/><path d="M1 2h9" stroke="#4a90e2" stroke-width="2"/><path d="M2 7l2-2 1 2 2-3 2 2" fill="none" stroke="#3878d8"/><rect x="3.500" y="5.500" width="11" height="9" rx="1" fill="#fff" stroke="#4a90e2"/><path d="M4 7h10" stroke="#79b0ee" stroke-width="2"/><path d="M5 10l2 3 2-3 2 3 2-3" fill="none" stroke="#3068d8"/></svg>`;

const buttons = `<button type="button" aria-label="Minimize"><svg viewBox="0 0 15 15"><rect x="2" y="7" width="11" height="4" rx="1" fill="#fff" stroke="#5c6672"/></svg></button>
  <button type="button" aria-label="Maximize"><svg viewBox="0 0 15 15"><path d="M2.500 2.500h10v10h-10zM6 6v3h3v-3z" fill="#fff" fill-rule="evenodd" stroke="#5c6672"/></svg></button>
  <button type="button" class="close" aria-label="Close"><svg viewBox="0 0 15 15"><path d="M2 3h4l1.500 2L9 3h4L9.700 7.500 13 12H9l-1.500-2L6 12H2l3.300-4.500z" fill="#fff" stroke="#5c6672"/></svg></button>`;

function chartWindow(c) {
  const ticks = c.ticks.map((t, i) => [t, c.tick0 + i * c.tickStep]).concat(c.tags.map(([t, y]) => [t, y, true]));
  let panes = pane(c, c.main, '', mainBody(c),
    `<p class="label quote"><i></i><b>${c.name}</b>${c.ohlc}</p>${matrix}
     ${c.countdown ? `<p class="countdown">${c.countdown}</p>` : ''}<p class="atr">${c.atr}</p>`, ticks, 'main');
  c.strips.forEach(s => {
    const mid = (s.y[0] + s.y[1]) / 2;
    panes += pane(c, s.y, 'strip', stripBody(s.runs, s.y), label(s.label), [['1', mid - 1], ['0', mid + 7]]);
  });
  panes += pane(c, c.osc.y, '', oscBody(c), label(c.osc.label), sub(c.osc.levels));
  if (c.multi) {
    panes += pane(c, c.multi.y, 'strip multi', stripBody(c.multi.runs, c.multi.y), label(c.multi.label),
      [['1', c.multi.ends[0] + SUB], ['0', c.multi.ends[1] + SUB]]);
  }
  panes += pane(c, c.david.y, 'last', davidBody(c), label(c.david.label), sub(c.david.scale));
  const width = c.right - c.left;
  const [ex, ey, rx, ry] = c.ellipse;
  const times = c.times.map(([t, x]) => `<span style="left:${((x - c.left) / width * 100).toFixed(2)}%">${t}</span>`).join('');
  return `<article class="window${c.active ? ' active' : ''}">
    <header class="titlebar">${icon}<h1>${c.name}</h1>${buttons}</header>
    <div class="client"><div class="stack">${panes}
      <svg class="overlay" viewBox="${c.left} ${c.top} ${width} ${c.bottom - c.top}" preserveAspectRatio="none" aria-hidden="true"><ellipse cx="${ex}" cy="${ey}" rx="${rx}" ry="${ry}" stroke="#fff" stroke-width="2"/></svg>
    </div><div class="times">${times}</div></div></article>`;
}

document.getElementById('workspace').innerHTML = CHARTS.map(chartWindow).join('');
```
